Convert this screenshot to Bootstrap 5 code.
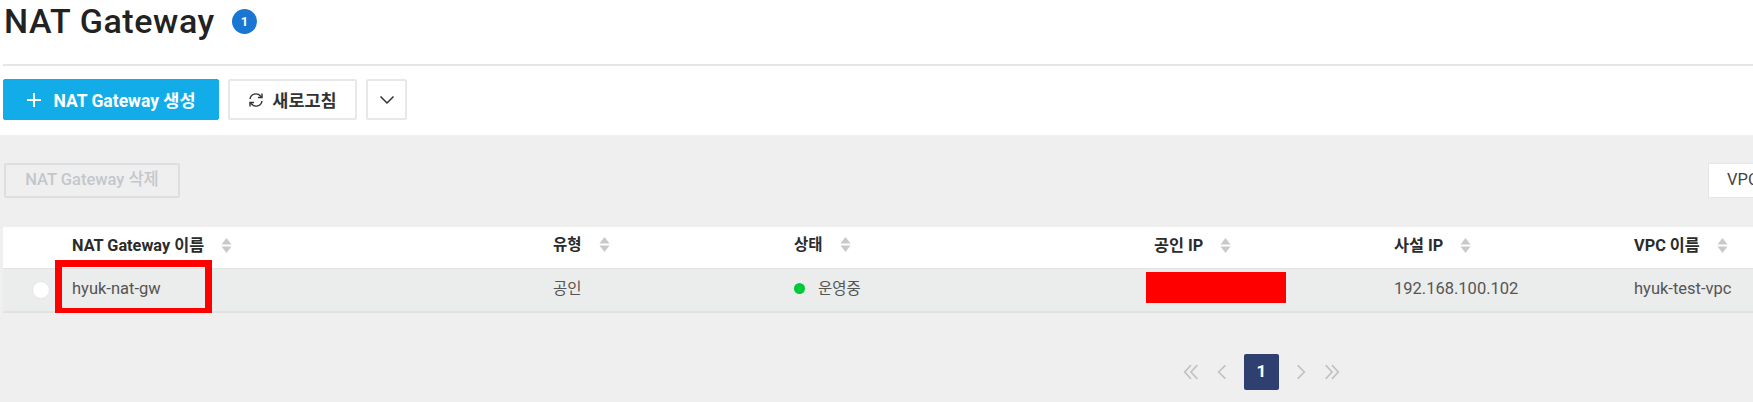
<!DOCTYPE html>
<html lang="ko">
<head>
  <meta charset="UTF-8">
  <title>NAT Gateway</title>
  <link href="https://cdn.jsdelivr.net/npm/bootstrap@5.3.3/dist/css/bootstrap.min.css" rel="stylesheet">
  <style>
    html, body { height: 402px; overflow: hidden; }
    body { font-family: Roboto, "Noto Sans CJK KR", sans-serif; color: #222; background: #fff; }
    .title-bar { height: 66px; margin-left: 3px; padding-left: 1px; border-bottom: 2px solid #e6e6e6; align-items: flex-start; }
    .title-bar h1 { font-size: 34px; font-weight: 500; line-height: 42px; margin: 0; letter-spacing: .6px; }
    .count-dot { width: 25px; height: 25px; margin: 9px 0 0 17px; border-radius: 50%; background: #1976d2; color: #fff; font-size: 13px; font-weight: 700; }
    .tool-bar { height: 69px; padding: 13px 0 0 3px; gap: 9px; }
    .btn-create, .btn-tool { height: 41px; border-radius: 2px; font-size: 17.500px; font-weight: 700; padding: 0; }
    .btn-create span, .btn-tool span { padding-top: 3px; }
    .btn-create { width: 216px; background: #12ade9; border: 1px solid #12ade9; color: #fff; gap: 11px; white-space: nowrap; }
    .btn-tool { background: #fff; border: 2px solid #e8e8e8; color: #333; gap: 8px; }
    .btn-refresh { width: 129px; }
    .btn-caret { width: 41px; }
    .list-area { height: 267px; background: #efefef; padding-top: 28px; }
    .filter-row { height: 36px; padding-left: 4px; }
    .btn-delete { --bs-btn-disabled-color: #c3c7cb; --bs-btn-disabled-border-color: #dcdfe2; --bs-btn-disabled-bg: transparent; --bs-btn-disabled-opacity: 1; width: 176px; height: 35px; padding: 0; border-width: 2px; border-radius: 2px; font-size: 16.500px; font-weight: 500; white-space: nowrap; }
    .filter-box { position: absolute; left: 1708px; top: 0; width: 225px; height: 35px; padding: 4px 18px; background: #fff; border: 1px solid #e6e6e6; font-size: 16.500px; color: #444; white-space: nowrap; }
    .table-wrap { margin: 28px 0 0 3px; overflow: hidden; position: relative; }
    .nat-table { table-layout: fixed; width: 1816px; margin: 0; --bs-table-bg: transparent; }
    .nat-table th, .nat-table td { padding: 0 0 0 15px; vertical-align: middle; border: 0; white-space: nowrap; }
    .nat-table thead tr { height: 41px; background: #fff; }
    .nat-table thead th { font-size: 16.300px; font-weight: 700; color: #2b2b2b; border-bottom: 1px solid #e3e3e3; padding-bottom: 3px; }
    .nat-table tbody tr { height: 44px; background: #ebecec; }
    .nat-table tbody td { font-size: 16.500px; color: #555; border-bottom: 2px solid #e2e2e2; }
    .nat-table .hangul-cell { font-size: 15.500px; }
    .sort-mark { display: inline-block; width: 11px; height: 15px; margin-left: 17px; vertical-align: -2px; }
    .radio-mark { display: block; width: 18px; height: 18px; margin-left: 29px; border-radius: 50%; background: #fff; border: 1px solid #e6e6e6; }
    .state-dot { display: inline-block; width: 11px; height: 11px; margin-right: 13px; border-radius: 50%; background: #00c73c; }
    .mask-box { width: 140px; height: 31px; margin: 0 0 4px -8px; background: #f00; }
    .name-mark { position: absolute; left: 52px; top: 33px; width: 157px; height: 55px; border: 7px solid #f00; }
    .pager { margin: 41px 0 0 1177px; height: 36px; }
    .pager-btn { width: 28px; height: 36px; color: #c2c2c2; }
    .pager-gap { margin-right: 3px; }
    .pager-on { width: 35px; height: 36px; margin: 0 8px; border-radius: 2px; background: #2f3f70; color: #fff; font-size: 17px; font-weight: 700; }
  </style>
</head>
<body>
<svg width="0" height="0" class="d-block">
  <defs>
    <symbol id="sort" viewBox="0 0 11 15"><path d="M5.500 0 10.500 6.500H.5zM5.500 15 .5 8.500H10.500z" fill="#c9c9c9"/></symbol>
  </defs>
</svg>

<header class="title-bar d-flex">
  <h1>NAT Gateway</h1>
  <span class="count-dot d-flex align-items-center justify-content-center">1</span>
</header>

<div class="tool-bar d-flex">
  <button type="button" class="btn btn-create d-flex align-items-center justify-content-center">
    <svg width="16" height="16" viewBox="0 0 16 16"><path d="M8 1v14M1 8h14" stroke="#fff" stroke-width="2"/></svg>
    <span>NAT Gateway 생성</span>
  </button>
  <button type="button" class="btn btn-tool btn-refresh d-flex align-items-center justify-content-center">
    <svg width="16" height="16" viewBox="0 0 16 16" fill="none" stroke="#333" stroke-width="1.400"><path d="M2 7a6 6 0 0 1 10.500-3L14 5.500"/><path d="M14 1.500v4h-4"/><path d="M14 9a6 6 0 0 1-10.500 3L2 10.500"/><path d="M2 14.500v-4h4"/></svg>
    <span>새로고침</span>
  </button>
  <button type="button" class="btn btn-tool btn-caret d-flex align-items-center justify-content-center">
    <svg width="16" height="10" viewBox="0 0 16 10" fill="none" stroke="#333" stroke-width="1.500"><path d="M1.500 1.500 8 8l6.500-6.500"/></svg>
  </button>
</div>

<main class="list-area">
  <div class="filter-row position-relative">
    <button type="button" class="btn btn-delete" disabled>NAT Gateway 삭제</button>
    <div class="filter-box">VPC 이름</div>
  </div>

  <div class="table-wrap">
    <table class="table nat-table">
      <colgroup>
        <col width="54"><col width="481"><col width="241"><col width="360"><col width="240"><col width="240"><col width="200">
      </colgroup>
      <thead>
        <tr>
          <th></th>
          <th>NAT Gateway 이름<svg class="sort-mark"><use href="#sort"/></svg></th>
          <th class="hangul-cell">유형<svg class="sort-mark"><use href="#sort"/></svg></th>
          <th class="hangul-cell">상태<svg class="sort-mark"><use href="#sort"/></svg></th>
          <th>공인 IP<svg class="sort-mark"><use href="#sort"/></svg></th>
          <th>사설 IP<svg class="sort-mark"><use href="#sort"/></svg></th>
          <th>VPC 이름<svg class="sort-mark"><use href="#sort"/></svg></th>
        </tr>
      </thead>
      <tbody>
        <tr>
          <td class="p-0"><span class="radio-mark"></span></td>
          <td>hyuk-nat-gw</td>
          <td class="hangul-cell">공인</td>
          <td class="hangul-cell"><span class="state-dot"></span>운영중</td>
          <td><div class="mask-box"></div></td>
          <td>192.168.100.102</td>
          <td>hyuk-test-vpc</td>
        </tr>
      </tbody>
    </table>
    <div class="name-mark"></div>
  </div>

  <nav class="pager d-flex align-items-center">
    <span class="pager-btn pager-gap d-flex align-items-center justify-content-center"><svg width="16" height="16" viewBox="0 0 14 14" fill="none" stroke="currentColor" stroke-width="1.500"><path d="M7 1 1.500 7 7 13M12.500 1 7 7l5.500 6"/></svg></span>
    <span class="pager-btn d-flex align-items-center justify-content-center"><svg width="10" height="16" viewBox="0 0 9 14" fill="none" stroke="currentColor" stroke-width="1.500"><path d="M7.500 1 1.500 7l6 6"/></svg></span>
    <span class="pager-on d-flex align-items-center justify-content-center">1</span>
    <span class="pager-btn pager-gap d-flex align-items-center justify-content-center"><svg width="10" height="16" viewBox="0 0 9 14" fill="none" stroke="currentColor" stroke-width="1.500"><path d="M1.500 1l6 6-6 6"/></svg></span>
    <span class="pager-btn d-flex align-items-center justify-content-center"><svg width="16" height="16" viewBox="0 0 14 14" fill="none" stroke="currentColor" stroke-width="1.500"><path d="M1.500 1 7 7l-5.500 6M7 1l5.500 6L7 13"/></svg></span>
  </nav>
</main>

<script src="https://cdn.jsdelivr.net/npm/bootstrap@5.3.3/dist/js/bootstrap.bundle.min.js"></script>
</body>
</html>
